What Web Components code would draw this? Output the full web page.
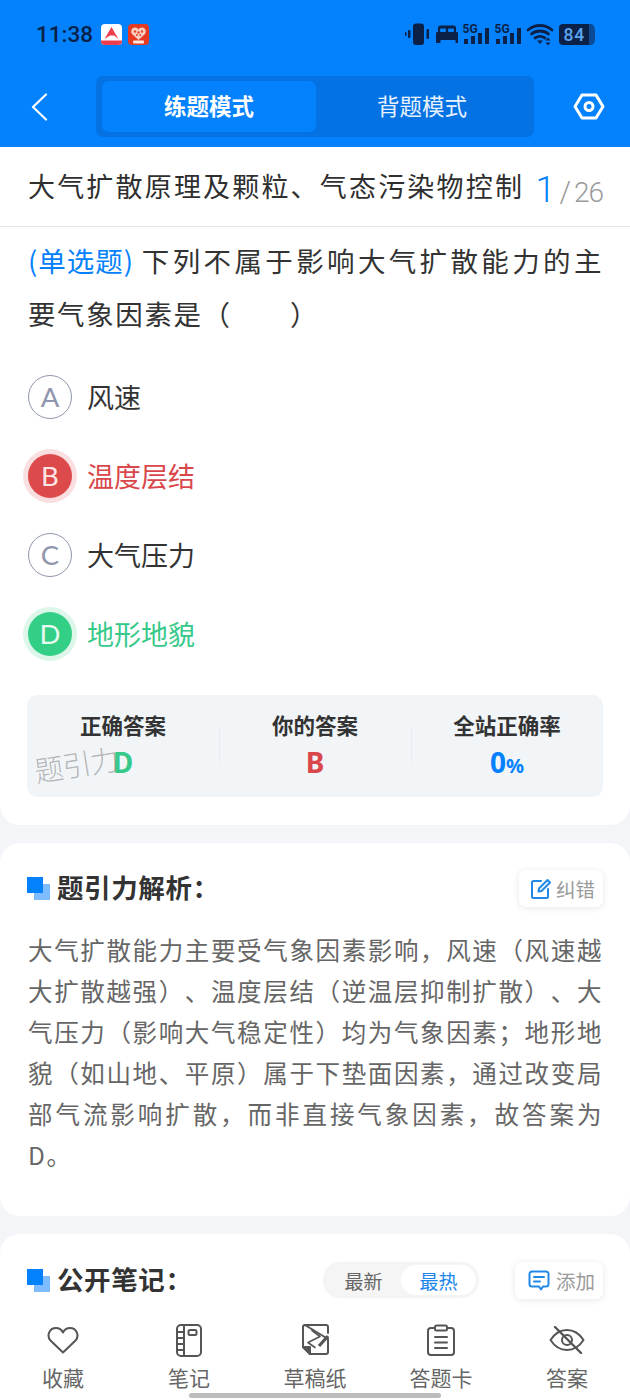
<!DOCTYPE html>
<html lang="zh"><head><meta charset="utf-8"><title>题引力</title>
<style>
html,body{margin:0;padding:0;background:#f3f5f9}
body{width:630px;height:1400px;overflow:hidden;font-family:"Noto Sans CJK SC","Noto Sans",sans-serif;color:#333}
</style></head><body>
<x-app>
  <x-status-bar></x-status-bar>
  <x-nav-bar></x-nav-bar>
  <x-card slot="main" kind="first">
    <x-title-row></x-title-row>
    <x-question></x-question>
    <x-option letter="A">风速</x-option>
    <x-option letter="B" state="wrong">温度层结</x-option>
    <x-option letter="C">大气压力</x-option>
    <x-option letter="D" state="right">地形地貌</x-option>
    <x-stats></x-stats>
  </x-card>
  <x-card slot="main" kind="analysis">
    <x-section-head heading="题引力解析：">
      <x-chip icon="edit" slot="end">纠错</x-chip>
    </x-section-head>
    <x-para>大气扩散能力主要受气象因素影响，风速（风速越大扩散越强）、温度层结（逆温层抑制扩散）、大气压力（影响大气稳定性）均为气象因素；地形地貌（如山地、平原）属于下垫面因素，通过改变局部气流影响扩散，而非直接气象因素，故答案为D。</x-para>
  </x-card>
  <x-card slot="main" kind="notes">
    <x-section-head heading="公开笔记：">
      <x-sort slot="end"></x-sort>
      <x-chip icon="msg" slot="end">添加</x-chip>
    </x-section-head>
  </x-card>
  <x-tab-bar slot="tabs"></x-tab-bar>
</x-app>
<script>
function def(name, html){
  customElements.define(name, class extends HTMLElement{
    connectedCallback(){
      if(this.shadowRoot) return;
      const r=this.attachShadow({mode:'open'});
      r.innerHTML=typeof html==='function'?html(this):html;
    }
  });
}
const INK='#0b2147';
def('x-app',`<style>
:host{display:flex;flex-direction:column;width:630px;height:1400px;position:relative;overflow:hidden}
.main{height:1165px;overflow:hidden;flex:none;display:flex;flex-direction:column;gap:18px}
</style><slot></slot><div class="main"><slot name="main"></slot></div><slot name="tabs"></slot>`);

def('x-status-bar',`<style>
:host{display:flex;align-items:center;height:68px;background:#0481fd;padding:1px 0 0 36px;box-sizing:border-box;color:${INK};flex:none}
.t{font:500 22.500px/1 Roboto,sans-serif;width:65px;letter-spacing:0}
svg{display:block}
.ap{display:flex;gap:6px}
.sp{flex:1}
.st{display:flex;align-items:center;margin-right:35px}
</style>
<span class="t">11:38</span>
<div class="ap">
<svg width="21" height="21" viewBox="0 0 21 21"><rect width="21" height="21" rx="4" fill="#fff"/><path d="M0 16.500h21v.5a4 4 0 0 1-4 4H4a4 4 0 0 1-4-4z" fill="#ee3d4c"/><path d="M3.500 15 10.500 3l4 7 3 5-4.500-3.500L9 11.500z" fill="#ee3d4c"/></svg>
<svg width="21" height="21" viewBox="0 0 21 21"><rect width="21" height="21" rx="4" fill="#e63a22"/><path d="M10.500 16 4 10C2 7 4 3.500 7 3.500c1.500 0 2.800.8 3.500 2 .7-1.200 2-2 3.500-2 3 0 5 3.500 3 6.500z" fill="#f9cfc2"/><g fill="#e6492e"><circle cx="7" cy="7.500" r="1.200"/><circle cx="10.500" cy="8.500" r="1.200"/><circle cx="14" cy="7.500" r="1.200"/><circle cx="8.800" cy="11" r="1"/><circle cx="12.200" cy="11" r="1"/></g><rect x="5" y="16.500" width="11" height="3" rx="1" fill="#fbe7dc"/></svg>
</div>
<div class="sp"></div>
<div class="st">
<svg width="190" height="24" viewBox="0 0 190 24">
  <g fill="${INK}">
    <rect x="8" y="0.500" width="11" height="21.500" rx="3"/>
    <rect x="3" y="7" width="2.500" height="8" rx="1"/><rect x="0" y="9" width="1.500" height="4" rx=".7"/>
    <rect x="21.500" y="6" width="2.500" height="10" rx="1"/>
    <path d="M33 9V5a2.500 2.500 0 0 1 2.500-2.500h13A2.500 2.500 0 0 1 51 5v4h1a1.500 1.500 0 0 1 1 1.500V20h-2.500v-3h-15v3H31v-9.500A1.500 1.500 0 0 1 32 9z"/>
  </g>
  <g fill="#0481fd"><rect x="35" y="5.500" width="6" height="3.500" rx="1"/><rect x="43" y="5.500" width="6" height="3.500" rx="1"/></g>
  <g fill="${INK}">
    <text x="57.500" y="9.500" font-family="Roboto,sans-serif" font-weight="700" font-size="12">5G</text>
    <rect x="59" y="16" width="4" height="5"/><rect x="66" y="13" width="4" height="8"/><rect x="73" y="10" width="4" height="11"/><rect x="80" y="5" width="4" height="16"/>
    <text x="89.500" y="9.500" font-family="Roboto,sans-serif" font-weight="700" font-size="12">5G</text>
    <rect x="91" y="16" width="4" height="5"/><rect x="98" y="13" width="4" height="8"/><rect x="105" y="10" width="4" height="11"/><rect x="112" y="5" width="4" height="16"/>
  </g>
  <g fill="none" stroke="${INK}" stroke-width="2.800" stroke-linecap="round">
    <path d="M123 7C130 1 140 1 147 7"/><path d="M126.500 11C131.500 7 138.500 7 143.500 11"/><path d="M130 15C133 13 137 13 140 15"/>
  </g>
  <path d="M135 21l-3-3.500h6z" fill="${INK}"/><path d="M143 14.500l2.500 3h-5zM143 22.500l2.500-3h-5z" fill="${INK}"/>
  <path d="M154 5a4 4 0 0 1 4-4h26v21h-26a4 4 0 0 1-4-4z" fill="${INK}"/>
  <path d="M184 1h2c2.500 0 4 3 4 7v7c0 4-1.500 7-4 7h-2z" fill="#0c4a94"/>
  <text x="158.500" y="17.700" font-family="Roboto,sans-serif" font-weight="500" font-size="17.500" letter-spacing=".8" fill="#5aa6ee">84</text>
</svg>
</div>`);

def('x-nav-bar',`<style>
:host{display:flex;align-items:center;height:79px;background:#0481fd;flex:none;box-sizing:border-box;padding:8px 25px 10px 30px}
.back{width:66px;display:flex}
.seg{width:438px;height:61px;box-sizing:border-box;padding:5px 6px;background:#0472e3;border-radius:7px;display:flex;color:#fff;font-size:22.500px}
.seg span{flex:1;display:flex;align-items:center;justify-content:center;padding-bottom:3px}
.on{background:#0481fd;border-radius:7px;font-weight:700;flex:none!important;width:214px;box-sizing:border-box}
.off{color:#e8f2ff}
.gear{margin-left:auto;display:flex}
</style>
<div class="back"><svg width="18" height="28" viewBox="0 0 18 28" fill="none" stroke="#fff" stroke-width="2.200" stroke-linecap="round" stroke-linejoin="round"><path d="M16 1.500 3 14l13 12.500"/></svg></div>
<div class="seg"><span class="on">练题模式</span><span class="off">背题模式</span></div>
<div class="gear"><svg width="32" height="27" viewBox="0 0 32 27" fill="none" stroke="#fff" stroke-width="3" stroke-linejoin="round"><path d="M9 2h14l7 11.500L23 25H9L2 13.500z"/><circle cx="16" cy="13.500" r="4"/></svg></div>`);

def('x-card',`<style>
:host{display:block;background:#fff;border-radius:20px;flex:none}
:host([kind=first]){border-radius:0 0 20px 20px;height:678px;box-sizing:border-box}
:host([kind=analysis]){height:373px;padding:25px 27px 0 28px;box-sizing:border-box}
:host([kind=notes]){height:200px;padding:26px 27px 0 28px;box-sizing:border-box}
</style><slot></slot>`);

def('x-title-row',`<style>
:host{display:flex;align-items:center;height:80px;border-bottom:1px solid #e3e5e8;box-sizing:border-box;padding:0 27px 2px 28px}
.t{font-size:27px;letter-spacing:2.180px;color:#2f2f2f;flex:1;white-space:nowrap}
.n{font:300 28px/1 Roboto,sans-serif;color:#9a9a9a;white-space:nowrap;letter-spacing:-1px;display:flex;align-items:baseline;padding-top:8px}
.n b{font-weight:300;font-size:36px;color:#0481fd;margin-right:4px;letter-spacing:0}
.n i{font-style:normal;margin-right:4px;font-size:29px}
</style><div class="t">大气扩散原理及颗粒、气态污染物控制</div><div class="n"><b>1</b><i>/</i>26</div>`);

def('x-question',`<style>
:host{display:block;padding:7px 27px 17px 28px;font-size:27.500px;line-height:53px;letter-spacing:1.600px;color:#333;text-align:justify}
.k{display:inline-block;color:#0481fd;letter-spacing:1px;margin-right:6px}
</style><span class="k">(单选题)</span>下列不属于影响大气扩散能力的主要气象因素是（&emsp;&emsp;）`);

def('x-option',h=>`<style>
:host{display:flex;align-items:center;height:79px;padding-left:28px;font-size:27px;color:#333;box-sizing:border-box}
.c{width:44px;height:44px;box-sizing:border-box;border-radius:50%;border:1.500px solid #8f96ad;color:#8f96ad;display:flex;align-items:center;justify-content:center;font:400 27.500px/1 Lato,"Open Sans",sans-serif;margin-right:15px;flex:none}
:host([state=wrong]){color:#d9474b}
:host([state=wrong]) .c{background:#dd4a4c;border:0;color:#fbe5e5;box-shadow:0 0 0 5px #f9dfe0}
:host([state=right]){color:#37c98a}
:host([state=right]) .c{background:#33cf86;border:0;color:#e6faf0;box-shadow:0 0 0 5px #dcf6e9}
</style><span class="c">${h.getAttribute('letter')}</span><slot></slot>`);

def('x-stats',`<style>
:host{display:grid;grid-template-columns:repeat(3,1fr);margin:22px 27px 0 27px;height:102px;background:#f2f5f8;border-radius:10px;position:relative}
.i{display:flex;flex-direction:column;align-items:center;padding-top:15px;box-sizing:border-box;font-size:21.500px;font-weight:700;color:#333;position:relative}
.i + .i::before{content:"";position:absolute;left:0;top:32px;height:36px;width:1px;background:#e9edf1}
.l{line-height:30px}
.v{font:700 28px/30px "Noto Sans",sans-serif;margin-top:7px}
.v small{font-size:20px}
.wm{position:absolute;left:7px;top:50px;font-size:29px;font-weight:300;color:rgba(90,90,90,.42);transform:rotate(-9deg);letter-spacing:-1px;line-height:36px;white-space:nowrap;pointer-events:none}
</style>
<div class="i"><span class="l">正确答案</span><span class="v" style="color:#37c98a">D</span></div>
<div class="i"><span class="l">你的答案</span><span class="v" style="color:#d9474b">B</span></div>
<div class="i"><span class="l">全站正确率</span><span class="v" style="color:#0481fd">0<small>%</small></span></div>
<span class="wm">题引力</span>`);

def('x-section-head',h=>`<style>
:host{display:flex;align-items:center;height:40px}
.m{width:23px;height:23px;position:relative;margin:0 7px 0 -1px;flex:none}
.m i{position:absolute;width:16px;height:16px;display:block}
.m i:first-child{right:0;bottom:0;background:#7dbdff}
.m i:last-child{left:0;top:0;background:#0481fd}
.h{font-size:26.500px;font-weight:700;color:#333;flex:1;letter-spacing:.6px;white-space:nowrap;padding-bottom:4px}
.e{display:flex;gap:36px;align-items:center}
</style><span class="m"><i></i><i></i></span><span class="h">${h.getAttribute('heading')}</span><span class="e"><slot name="end"></slot></span>`);

const ICONS={
edit:`<svg style="margin-right:5px" width="20" height="21" viewBox="0 0 20 21" fill="none" stroke="#2089e8" stroke-width="2" stroke-linecap="round" stroke-linejoin="round"><path d="M10 3H2.500A1.500 1.500 0 0 0 1 4.500v14A1.500 1.500 0 0 0 2.500 20h13a1.500 1.500 0 0 0 1.500-1.500V11"/><path d="M7.500 13.500l.5-3L16.500 2l2.500 2.500-8.500 8.500z"/></svg>`,
msg:`<svg style="margin:0 6px 0 1px" width="22" height="21" viewBox="0 0 22 21" fill="none" stroke="#2089e8" stroke-width="2" stroke-linecap="round" stroke-linejoin="round"><path d="M4 1.500h14A2.500 2.500 0 0 1 20.500 4v10a2.500 2.500 0 0 1-2.500 2.500h-3L13 19.500l-2-3H4A2.500 2.500 0 0 1 1.500 14V4A2.500 2.500 0 0 1 4 1.500z"/><path d="M6 7h10M6 11.500h6"/></svg>`};
def('x-chip',h=>`<style>
:host{display:inline-flex;align-items:center;height:37px;box-sizing:border-box;padding:0 8px 0 12px;border-radius:7px;background:#fff;box-shadow:0 1px 7px rgba(0,0,0,.10);font-size:19.500px;color:#9a9a9a;white-space:nowrap}
svg{display:block;flex:none}
</style>${ICONS[h.getAttribute('icon')]}<slot></slot>`);

def('x-sort',`<style>
:host{display:flex;width:156px;height:36px;background:#f5f5f5;border-radius:18px;box-sizing:border-box;padding:3px;font-size:19px;color:#666;box-shadow:0 0 2px rgba(0,0,0,.05)}
span{display:flex;align-items:center;justify-content:center}
.a{flex:none;width:75px}
.b{flex:1;background:#fff;border-radius:15px;color:#1c86ea}
</style><span class="a">最新</span><span class="b">最热</span>`);

def('x-para',`<style>
:host{display:block;margin-top:21px;font-size:24.500px;line-height:41px;letter-spacing:1.600px;color:#666;word-break:break-all;text-align:justify;text-spacing-trim:space-all}
</style><slot></slot>`);

def('x-tab-bar',`<style>
:host{display:flex;height:88px;background:#fff;box-sizing:border-box;padding:11px 0 0 0;position:relative;flex:none}
.g{display:flex;width:630px}
.t{flex:1;display:flex;flex-direction:column;align-items:center;font-size:21px;color:#666}
.i{height:34px;display:flex;align-items:center;justify-content:center;margin-bottom:6px}
.l{line-height:28px}
svg{display:block;fill:none;stroke:#555;stroke-width:2;stroke-linecap:round;stroke-linejoin:round}
.bar{position:absolute;left:189px;top:81px;width:252px;height:5px;border-radius:3px;background:#bcbcbc}
</style>
<div class="g">
<div class="t"><span class="i"><svg width="32" height="28" viewBox="0 0 32 28"><path d="M16 26.500 3.500 14.500C-.5 10 2 2 9 2c3 0 5.500 1.500 7 4.500C17.500 3.500 20 2 23 2c7 0 9.500 8 5.500 12.500z"/></svg></span><span class="l">收藏</span></div>
<div class="t"><span class="i"><svg width="26" height="33" viewBox="0 0 26 33"><rect x="1" y="1" width="24" height="31" rx="4"/><path d="M8 1v31M1 8h7M1 14h7M1 20h7M1 26h7"/><rect x="12.500" y="6" width="8" height="5" rx="1.500"/></svg></span><span class="l">笔记</span></div>
<div class="t"><span class="i"><svg width="28" height="33" viewBox="0 0 28 33"><path d="M4 1h21a2 2 0 0 1 2 2v6M27 15v13a2 2 0 0 1-2 2H9l-7-7V3a2 2 0 0 1 2-2z"/><path d="M2 23h7v7z" fill="#555"/><path d="M11 6.500 19 12.500 7 18.500 14 23.500" stroke-width="1.600"/><path d="M18 22 27 12" stroke-width="3.200" stroke-linecap="butt"/></svg></span><span class="l">草稿纸</span></div>
<div class="t"><span class="i"><svg width="28" height="32" viewBox="0 0 28 32"><path d="M7 4H4a3 3 0 0 0-3 3v21a3 3 0 0 0 3 3h20a3 3 0 0 0 3-3V7a3 3 0 0 0-3-3h-3"/><rect x="8" y="1.500" width="12" height="5" rx="1.500"/><path d="M8 13h12M8 18.500h12M8 24h12"/></svg></span><span class="l">答题卡</span></div>
<div class="t"><span class="i"><svg width="36" height="28" viewBox="0 0 36 28"><path d="M1.500 14C6 7 11.500 4 18 4s12 3 16.500 10C30 21 24.500 24 18 24S6 21 1.500 14z"/><circle cx="18" cy="14" r="5"/><path d="M6 1l26 26" stroke-width="2.400"/></svg></span><span class="l">答案</span></div>
</div>
<span class="bar"></span>`);
</script>
</body></html>
